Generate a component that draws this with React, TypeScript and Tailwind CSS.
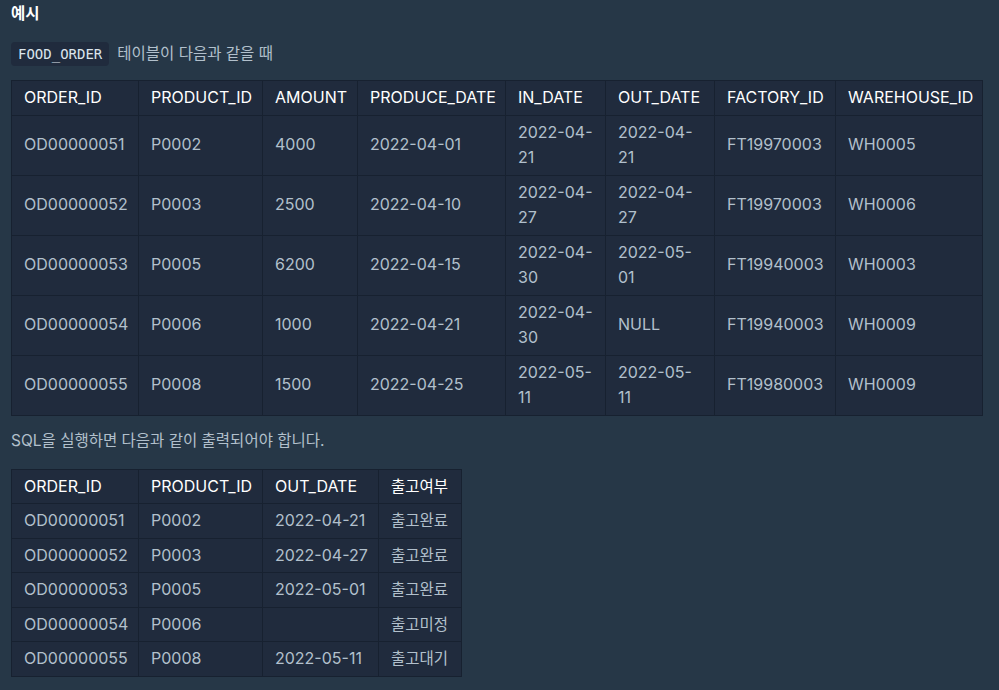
import React from "react";

const font = { fontFamily: '"Inter", "Noto Sans CJK KR", sans-serif' };

const orderCols = [
  "ORDER_ID",
  "PRODUCT_ID",
  "AMOUNT",
  "PRODUCE_DATE",
  "IN_DATE",
  "OUT_DATE",
  "FACTORY_ID",
  "WAREHOUSE_ID",
];
const orderWidths = [127, 124, 95, 148, 100, 109, 121, 147];

const orders = [
  ["OD00000051", "P0002", "4000", "2022-04-01", "2022-04-21", "2022-04-21", "FT19970003", "WH0005"],
  ["OD00000052", "P0003", "2500", "2022-04-10", "2022-04-27", "2022-04-27", "FT19970003", "WH0006"],
  ["OD00000053", "P0005", "6200", "2022-04-15", "2022-04-30", "2022-05-01", "FT19940003", "WH0003"],
  ["OD00000054", "P0006", "1000", "2022-04-21", "2022-04-30", "NULL", "FT19940003", "WH0009"],
  ["OD00000055", "P0008", "1500", "2022-04-25", "2022-05-11", "2022-05-11", "FT19980003", "WH0009"],
];

const resultCols = ["ORDER_ID", "PRODUCT_ID", "OUT_DATE", "출고여부"];
const resultWidths = [127, 124, 116, 83];

const results = [
  ["OD00000051", "P0002", "2022-04-21", "출고완료"],
  ["OD00000052", "P0003", "2022-04-27", "출고완료"],
  ["OD00000053", "P0005", "2022-05-01", "출고완료"],
  ["OD00000054", "P0006", "", "출고미정"],
  ["OD00000055", "P0008", "2022-05-11", "출고대기"],
];

const hangul = /[\uac00-\ud7a3]/;

function DataTable({
  cols,
  widths,
  rows,
  nowrap = false,
}: {
  cols: string[];
  widths: number[];
  rows: string[][];
  nowrap?: boolean;
}) {
  const cell = (v: string) =>
    `border border-[#172130] px-3 py-[4px] leading-[25.5px] ${nowrap ? "whitespace-nowrap" : ""} ${
      hangul.test(v) ? "text-[15.5px]" : ""
    }`;
  return (
    <table
      className="table-fixed border-collapse bg-[#202b3d] text-[16px]"
      style={{ width: widths.reduce((a, b) => a + b, 0) + 1 }}
    >
      <colgroup>
        {widths.map((w, i) => (
          <col key={i} style={{ width: w }} />
        ))}
      </colgroup>
      <thead>
        <tr>
          {cols.map((c) => (
            <th key={c} className={`${cell(c)} text-left font-normal text-white`}>
              {c}
            </th>
          ))}
        </tr>
      </thead>
      <tbody>
        {rows.map((r, i) => (
          <tr key={i}>
            {r.map((v, j) => (
              <td key={j} className={`${cell(v)} align-middle text-[#b2c0cc]`}>
                {v}
              </td>
            ))}
          </tr>
        ))}
      </tbody>
    </table>
  );
}

export default function App() {
  return (
    <div className="min-h-[690px] w-[999px] bg-[#263747] px-[11px] pt-[3px]" style={font}>
      <h6 className="text-[15.5px] leading-[22px] font-semibold text-white">예시</h6>

      <p className="mt-[17px] flex items-center text-[15.5px] leading-[22px] text-[#b2c0cc]">
        <code
          className="mr-[8px] rounded-[4px] bg-[#202b3d] px-[7px] py-[1px] text-[14px] text-[#dbe4ec]"
          style={{ fontFamily: '"DejaVu Sans Mono", monospace' }}
        >
          FOOD_ORDER
        </code>
        테이블이 다음과 같을 때
      </p>

      <div className="mt-[14px]">
        <DataTable cols={orderCols} widths={orderWidths} rows={orders} />
      </div>

      <p className="mt-[14px] text-[15.5px] leading-[22px] text-[#b2c0cc]">
        SQL을 실행하면 다음과 같이 출력되어야 합니다.
      </p>

      <div className="mt-[17px]">
        <DataTable cols={resultCols} widths={resultWidths} rows={results} nowrap />
      </div>
    </div>
  );
}
